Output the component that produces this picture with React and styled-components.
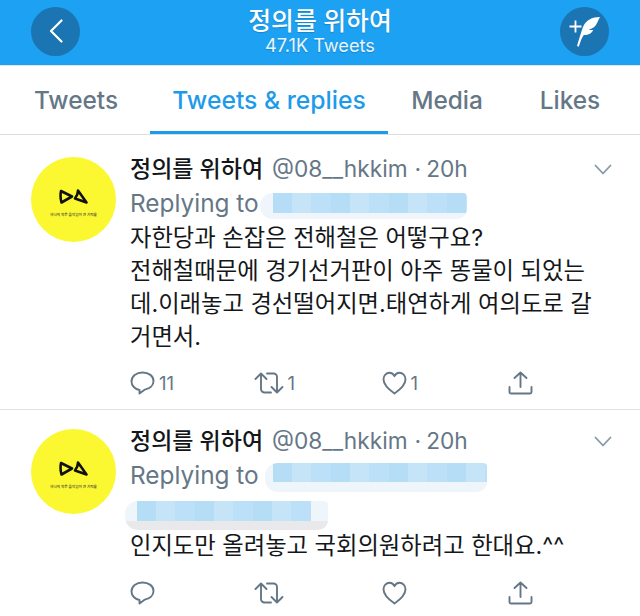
import React from 'react';
import styled, { createGlobalStyle } from 'styled-components';

const GlobalStyle = createGlobalStyle`
  html, body {
    margin: 0;
    padding: 0;
    background: #fff;
    font-family: "Inter", "Liberation Sans", "Noto Sans CJK KR", sans-serif;
  }
`;

const Page = styled.div`
  width: 640px;
  height: 616px;
  overflow: hidden;
  background: #fff;
`;

const Header = styled.header`
  height: 66px;
  background: #1da1f2;
  display: flex;
  align-items: center;
  justify-content: space-between;
  padding: 0 31px 3px;
  box-sizing: border-box;
  border-bottom: 1px solid #dfe6ea;
`;

const RoundButton = styled.button`
  width: 49px;
  height: 49px;
  border-radius: 50%;
  border: 0;
  padding: 0;
  background: #1b75b3;
  display: flex;
  align-items: center;
  justify-content: center;
`;

const HeaderTitle = styled.div`
  display: flex;
  flex-direction: column;
  align-items: center;
  color: #fff;
  text-shadow: 0 1px 1px rgba(0, 0, 0, 0.18);
`;

const TitleName = styled.div`
  font-size: 24.8px;
  line-height: 28px;
  font-weight: 500;
`;

const TitleCount = styled.div`
  font-size: 18.2px;
  line-height: 20px;
  color: #e8f5fe;
`;

const Tabs = styled.nav`
  height: 69px;
  display: grid;
  grid-template-columns: 150px 238px 118px 1fr;
  box-sizing: border-box;
  border-bottom: 1px solid #dcdfe2;
`;

const Tab = styled.div`
  display: flex;
  align-items: center;
  justify-content: center;
  height: 68px;
  padding-top: 3px;
  box-sizing: border-box;
  font-size: ${p => (p.$active ? '24.7px' : '24.4px')};
  font-weight: 500;
  color: ${p => (p.$active ? '#1d9bea' : '#657786')};
  border-bottom: 3px solid ${p => (p.$active ? '#1d9bea' : 'transparent')};
  ${p => p.$first && 'padding-left: 2px;'}
  ${p => p.$last && 'padding-right: 6px;'}
`;

const Tweet = styled.article`
  display: grid;
  grid-template-columns: 85px 1fr;
  column-gap: 14px;
  padding: ${p => p.$top}px 31px 0;
  box-sizing: border-box;
  height: ${p => p.$height}px;
  border-bottom: ${p => (p.$divider ? '1px solid #dfe3e6' : '0')};
`;

const Avatar = styled.div`
  width: 85px;
  height: 85px;
  border-radius: 50%;
  background: #fbf832;
  display: flex;
  flex-direction: column;
  align-items: center;
  justify-content: center;
  padding-top: 7px;
  box-sizing: border-box;
`;

const Motto = styled.span`
  font-size: 3.6px;
  line-height: 5px;
  color: #333;
  margin-top: 8px;
  font-weight: 500;
  white-space: nowrap;
`;

const Content = styled.div`
  min-width: 0;
`;

const Meta = styled.div`
  display: flex;
  align-items: baseline;
  height: 30px;
  margin-top: -3px;
  white-space: nowrap;
`;

const Name = styled.span`
  font-size: 23px;
  line-height: 30px;
  font-weight: 500;
  color: #14171a;
  margin-right: 9px;
`;

const Handle = styled.span`
  font-size: 22.7px;
  line-height: 30px;
  color: #657786;
`;

const Dot = styled.span`
  font-size: 23px;
  color: #657786;
  margin: 0 5px 0 7px;
`;

const Chevron = styled.svg`
  align-self: flex-start;
  margin: 10px -3px 0 auto;
`;

const Reply = styled.div`
  display: flex;
  flex-wrap: wrap;
  align-items: center;
  align-content: flex-start;
  height: ${p => (p.$tall ? '72px' : '36px')};
  margin-top: 1px;
  font-size: 24.4px;
  line-height: 36px;
  color: #657786;
  white-space: nowrap;
`;

const Redacted = styled.span`
  display: block;
  width: ${p => p.$w}px;
  height: ${p => p.$h}px;
  margin: ${p => p.$mt}px 0 0 ${p => p.$ml}px;
  border-radius: 13px 4px 10px 13px;
  background:
    repeating-linear-gradient(90deg, #b6ddf6 0 19px, #c5e4f8 19px 38px, #bce0f7 38px 58px)
      ${p => p.$inset}px 0 / ${p => p.$blueW}px ${p => p.$blueH}px no-repeat,
    ${p => p.$under};
`;

const Body = styled.p`
  margin: 0;
  font-size: 23.3px;
  line-height: 33px;
  color: #14171a;
  white-space: nowrap;
`;

const Actions = styled.div`
  margin-top: ${p => p.$mt}px;
  display: grid;
  grid-template-columns: 123.5px 128px 126px 25px;
`;

const Action = styled.div`
  display: flex;
  align-items: center;
  gap: 4px;
  font-size: 18.5px;
  color: #657786;
  height: 26px;
`;

const iconStroke = {
  fill: 'none',
  stroke: '#657786',
  strokeWidth: 1.9,
  strokeLinecap: 'round',
  strokeLinejoin: 'round',
};

const CommentIcon = () => (
  <svg width="25" height="26" viewBox="0 0 25 26" {...iconStroke}>
    <path d="M12.500 2.500C6.300 2.500 1.500 6.200 1.500 11.400c0 4.300 3.400 7.800 8 8.600v3.600l5.400-4C20 18.600 23.500 15.300 23.500 11c0-5-4.600-8.500-11-8.500z" />
  </svg>
);

const RetweetIcon = () => (
  <svg width="30" height="26" viewBox="0 0 30 26" {...iconStroke}>
    <path d="M1.500 9 7 3.500 12.500 9M7 4v15a3.500 3.500 0 0 0 3.500 3.500H17" />
    <path d="M28.500 17 23 22.500 17.500 17M23 22V7a3.500 3.500 0 0 0-3.500-3.500H13" />
  </svg>
);

const HeartIcon = () => (
  <svg width="25" height="26" viewBox="0 0 25 26" {...iconStroke}>
    <path d="M12.500 23.500C6 19 1.500 14.800 1.500 9.300 1.500 5.500 4.300 2.800 7.500 2.800c2.300 0 4 1.200 5 3.400 1-2.200 2.700-3.400 5-3.400 3.200 0 6 2.700 6 6.500 0 5.500-4.500 9.700-11 14.200z" />
  </svg>
);

const ShareIcon = () => (
  <svg width="25" height="26" viewBox="0 0 25 26" {...iconStroke}>
    <path d="M12.500 17V2.500M6.500 8l6-5.500 6 5.500M1.500 17v5a1.500 1.500 0 0 0 1.500 1.500h19a1.500 1.500 0 0 0 1.500-1.500v-5" />
  </svg>
);

const Bow = () => (
  <svg width="30" height="17" viewBox="0 0 30 17" fill="none" stroke="#111" strokeWidth="2.600" strokeLinejoin="round">
    <path d="M2 3 13 8.500 2.500 14.500C1.500 11 1.300 6.500 2 3z" />
    <path d="M19 2.500 27.500 14.500 16 10.500C18 8 19 5.500 19 2.500z" />
  </svg>
);

const ActionBar = ({ mt, replies, retweets, likes }) => (
  <Actions $mt={mt}>
    <Action><CommentIcon />{replies}</Action>
    <Action><RetweetIcon />{retweets}</Action>
    <Action><HeartIcon />{likes}</Action>
    <Action><ShareIcon /></Action>
  </Actions>
);

const ProfilePicture = () => (
  <Avatar>
    <Bow />
    <Motto>하나의 작은 움직임이 큰 기적을</Motto>
  </Avatar>
);

const MetaRow = () => (
  <Meta>
    <Name>정의를 위하여</Name>
    <Handle>@08__hkkim</Handle>
    <Dot>·</Dot>
    <Handle>20h</Handle>
    <Chevron width="18" height="11" viewBox="0 0 18 11" fill="none" stroke="#8899a6" strokeWidth="1.800" strokeLinecap="round" strokeLinejoin="round">
      <path d="M1.500 1.500 9 9.500l7.500-8" />
    </Chevron>
  </Meta>
);

export default function App() {
  return (
    <Page>
      <GlobalStyle />
      <Header>
        <RoundButton aria-label="Back">
          <svg width="14" height="24" viewBox="0 0 14 24" fill="none" stroke="#fff" strokeWidth="2.200" strokeLinecap="round" strokeLinejoin="round">
            <path d="M12.500 1.500 2 12l10.500 10.500" />
          </svg>
        </RoundButton>
        <HeaderTitle>
          <TitleName>정의를 위하여</TitleName>
          <TitleCount>47.1K Tweets</TitleCount>
        </HeaderTitle>
        <RoundButton aria-label="New tweet">
          <svg width="34" height="36" viewBox="0 0 34 36">
            <path d="M1.500 13.500h12M7.500 7.500v12" stroke="#fff" strokeWidth="1.800" fill="none" />
            <path d="M32 4c-8 0-14 3-17 10-2 5-3.500 11-6 19l1.800.7c1.500-5 3-9 5-11.700 5 0 8-2 9.500-5-2 0-3.500 0-4.500-.5 4.500-1 7-3.500 8.500-7 .8-2 1.700-3.500 2.700-5.500z" fill="#fff" />
          </svg>
        </RoundButton>
      </Header>
      <Tabs>
        <Tab $first>Tweets</Tab>
        <Tab $active>Tweets &amp; replies</Tab>
        <Tab>Media</Tab>
        <Tab $last>Likes</Tab>
      </Tabs>
      <Tweet $divider $top={22} $height={275}>
        <ProfilePicture />
        <Content>
          <MetaRow />
          <Reply>
            Replying to
            <Redacted $w={207} $h={26} $ml={1} $mt={6} $inset={13} $blueW={194} $blueH={20} $under="#eff5fa" />
          </Reply>
          <Body>
            자한당과 손잡은 전해철은 어떻구요?<br />
            전해철때문에 경기선거판이 아주 똥물이 되었는<br />
            데.이래놓고 경선떨어지면.태연하게 여의도로 갈<br />
            거면서.
          </Body>
          <ActionBar mt={17} replies="11" retweets="1" likes="1" />
        </Content>
      </Tweet>
      <Tweet $top={19} $height={206}>
        <ProfilePicture />
        <Content>
          <MetaRow />
          <Reply $tall>
            Replying to
            <Redacted $w={222} $h={29} $ml={6} $mt={5} $inset={8} $blueW={214} $blueH={19} $under="#eef6fc" />
            <Redacted $w={203} $h={29} $ml={-5} $mt={8} $inset={12} $blueW={174} $blueH={20} $under="linear-gradient(#eef5fb 0 20px, #e9e9ec 20px)" />
          </Reply>
          <Body>인지도만 올려놓고 국회의원하려고 한대요.^^</Body>
          <ActionBar mt={18} />
        </Content>
      </Tweet>
    </Page>
  );
}
